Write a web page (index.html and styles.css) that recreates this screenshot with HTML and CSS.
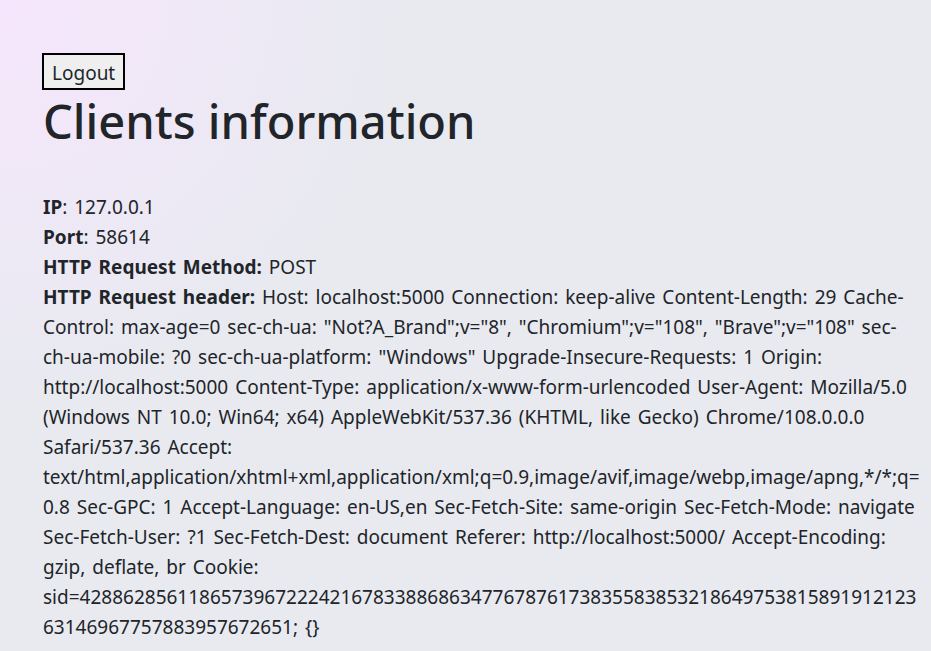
FILE: index.html
```html
<!DOCTYPE html>
<html lang="en">
<head>
<meta charset="utf-8">
<title>Clients information</title>
<link rel="stylesheet" href="styles.css">
</head>
<body>
<main class="page">
  <form class="logout-form">
    <button type="button" class="logout-btn">Logout</button>
  </form>
  <h1 class="title">Clients information</h1>
  <div class="info">
    <div class="row"><b>IP</b>: 127.0.0.1</div>
    <div class="row"><b>Port</b>: 58614</div>
    <div class="row"><b>HTTP Request Method:</b> POST</div>
    <div class="row"><b>HTTP Request header:</b> Host: localhost:5000 Connection: keep-alive Content-Length: 29 Cache-Control: max-age=0 sec-ch-ua: "Not?A_Brand";v="8", "Chromium";v="108", "Brave";v="108" sec-ch-ua-mobile: ?0 sec-ch-ua-platform: "Windows" Upgrade-Insecure-Requests: 1 Origin: http://localhost:5000 Content-Type: application/x-www-form-urlencoded User-Agent: Mozilla/5.0 (Windows NT 10.0; Win64; x64) AppleWebKit/537.36 (KHTML, like Gecko) Chrome/108.0.0.0 Safari/537.36 Accept: text/html,application/xhtml+xml,application/xml;q=0.9,image/avif,image/webp,image/apng,*/*;q=0.8 Sec-GPC: 1 Accept-Language: en-US,en Sec-Fetch-Site: same-origin Sec-Fetch-Mode: navigate Sec-Fetch-User: ?1 Sec-Fetch-Dest: document Referer: http://localhost:5000/ Accept-Encoding: gzip, deflate, br Cookie: sid=4288628561186573967222421678338868634776787617383558385321864975381589191212363146967757883957672651; {}</div>
  </div>
</main>
</body>
</html>
```
FILE: styles.css
```css
html, body {
  margin: 0;
  padding: 0;
}
body {
  min-height: 100vh;
  background-color: #e8eaf0;
  background-image: radial-gradient(circle at 0 0, #f6e6fd 0, rgba(246,230,253,0.65) 140px, rgba(232,234,240,0) 400px);
  color: #212529;
  font-family: "Noto Sans", "Open Sans", sans-serif;
}
.page {
  padding: 53px 8px 20px 42px;
}
.logout-form {
  margin: 0;
}
.logout-btn {
  font-family: "Noto Sans", sans-serif;
  font-size: 19px;
  line-height: 24px;
  color: #212529;
  background: #efefef;
  border: 2px solid #000;
  padding: 6px 8px 3px;
  margin: 0;
}
.title {
  margin: 0 0 0 1px;
  font-size: 47px;
  font-weight: 500;
  line-height: 62px;
}
.info {
  margin-top: 40px;
  margin-left: 1px;
  font-size: 19px;
  line-height: 30px;
  word-spacing: 2px;
  overflow-wrap: break-word;
}
.info b {
  font-weight: 700;
}
```
